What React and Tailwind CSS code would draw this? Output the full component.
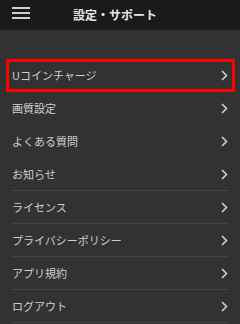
export default function App() {
  const items = [
    { label: "Uコインチャージ", sep: false },
    { label: "画質設定", sep: false },
    { label: "よくある質問", sep: false },
    { label: "お知らせ", sep: true },
    { label: "ライセンス", sep: true },
    { label: "プライバシーポリシー", sep: true },
    { label: "アプリ規約", sep: true },
    { label: "ログアウト", sep: true },
  ];
  return (
    <div
      className="w-[240px] h-[324px] bg-[#323232] overflow-hidden"
      style={{ fontFamily: '"Noto Sans CJK JP", "Noto Sans", sans-serif' }}
    >
      <div className="relative h-[30px] bg-[#1a1a1a] flex items-center">
        <div className="absolute left-[12px] top-[7px] flex flex-col gap-[3px]">
          <div className="w-[18px] h-[2px] bg-[#cfcfcf]" />
          <div className="w-[18px] h-[2px] bg-[#cfcfcf]" />
          <div className="w-[18px] h-[2px] bg-[#cfcfcf]" />
        </div>
        <span className="ml-[73px] text-[12px] font-bold text-[#e6e6e6] leading-none">
          設定・サポート
        </span>
      </div>
      <div className="pt-[29px] relative">
        {items.map((it, i) => (
          <div key={i} className="relative">
            <div
              className={
                "mx-[11px] h-[33px] flex items-center justify-between pl-[1px] pr-[1px] " +
                (it.sep ? "border-b border-[#444444]" : "border-b border-transparent")
              }
            >
              <span className="text-[11px] text-[#cfcfcf] leading-none">{it.label}</span>
              <svg width="7" height="11" viewBox="0 0 7 11" fill="none">
                <path d="M1 1 L5.5 5.5 L1 10" stroke="#cfcfcf" strokeWidth="1.6" />
              </svg>
            </div>
            {i === 0 && (
              <div className="absolute left-[6px] right-[5px] top-0 h-[33px] border-[3px] border-[#ff0000]" />
            )}
          </div>
        ))}
      </div>
    </div>
  );
}
